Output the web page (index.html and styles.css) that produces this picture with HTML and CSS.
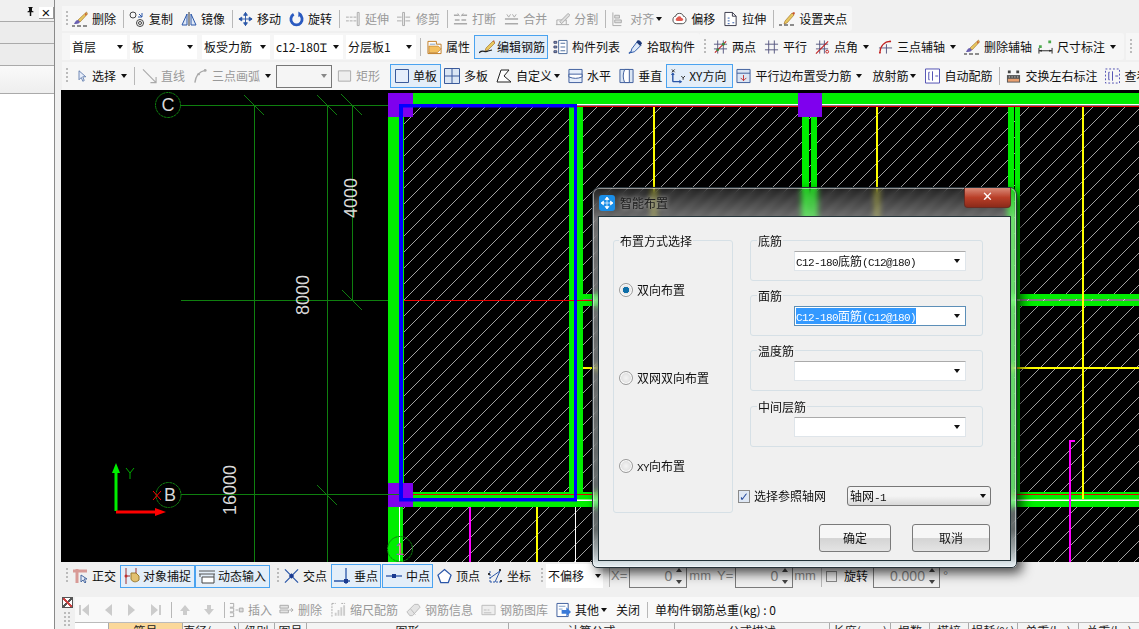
FILE: index.html
```html
<!DOCTYPE html>
<html lang="zh">
<head>
<meta charset="utf-8">
<title>智能布置</title>
<link rel="stylesheet" href="styles.css">
</head>
<body>
<svg class="sprite" aria-hidden="true">
<symbol id="i-pin" viewBox="0 0 12 12"><path d="M3 0h6v1H8v4l2 1v1H7v5H5V7H2V6l2-1V1H3z" fill="#111"/></symbol>
<symbol id="i-brush" viewBox="0 0 16 16"><path d="M14.500 1 6 9l2 2 7.500-8z" fill="#e8c860" stroke="#9a6a20" stroke-width=".6"/><path d="M13 2l2 1-1.500 2z" fill="#c8502a"/><path d="M6 9c-2 0-3 2-4 4 2 0 5 0 6-2z" fill="#6a60b0"/><path d="M0 15h3M5 15h4M11 15h4" stroke="#222"/></symbol>
<symbol id="i-copy" viewBox="0 0 16 16"><g fill="none" stroke="#444"><circle cx="4" cy="4" r="3"/><circle cx="11" cy="12" r="3.500"/><circle cx="11" cy="12" r="1.500"/></g><path d="M10 3l3 3M13 2v4H9" fill="none" stroke="#2a56a8"/></symbol>
<symbol id="i-mirror" viewBox="0 0 16 16"><path d="M8 1v14" stroke="#333"/><path d="M6 3 1 14h5zM10 3l5 11h-5z" fill="#dfe8f6" stroke="#2a56a8"/></symbol>
<symbol id="i-move" viewBox="0 0 16 16"><path d="M8 1v14M1 8h14M8 1 6 4h4zM8 15l-2-3h4zM1 8l3-2v4zM15 8l-3-2v4z" fill="#2a56a8" stroke="#2a56a8"/></symbol>
<symbol id="i-rotate" viewBox="0 0 16 16"><path d="M5 3a6 6 0 1 0 6 0" fill="none" stroke="#2a5ac0" stroke-width="3"/><path d="M10 0v6l4-3z" fill="#2a5ac0"/></symbol>
<symbol id="i-extend" viewBox="0 0 16 16"><path d="M0 6h3M4 6h3M8 6h3M0 10h3M4 10h3M8 10h3" stroke="#aaa"/><path d="M12 1h2v14h-2z" fill="#eee" stroke="#aaa"/></symbol>
<symbol id="i-trim" viewBox="0 0 16 16"><path d="M0 6h5M0 10h5M9 6h5M9 10h5" stroke="#aaa"/><path d="M6 1h2v14H6z" fill="#eee" stroke="#aaa"/></symbol>
<symbol id="i-break" viewBox="0 0 16 16"><path d="M1 4h5M9 4h6M1 13h14M2 9h5M9 9h5" stroke="#aaa" stroke-width="1.500"/><path d="M5 2l2 3M11 2l-2 3" stroke="#aaa"/></symbol>
<symbol id="i-merge" viewBox="0 0 16 16"><path d="M1 13h14M1 8h14" stroke="#aaa" stroke-width="1.500"/><path d="M3 3l2 3 2-3M9 3l2 3 2-3" fill="none" stroke="#aaa"/></symbol>
<symbol id="i-split" viewBox="0 0 16 16"><path d="M1 14h14M2 9h10M2 9v5M12 9v5" fill="none" stroke="#aaa"/><path d="M5 11 14 2l2 2-9 9z" fill="#ddd" stroke="#aaa"/></symbol>
<symbol id="i-align" viewBox="0 0 16 16"><path d="M2 1v14h9" fill="none" stroke="#aaa"/><path d="M4 4h5v3H4zM4 9h7v3H4z" fill="#ddd" stroke="#aaa"/></symbol>
<symbol id="i-offset" viewBox="0 0 16 16"><path d="M8 2c3 0 4 2 4 3 2 0 3 2 3 4s-2 4-4 4H5c-3 0-4-2-4-4s1-4 3-4c0-2 2-3 4-3z" fill="#fff" stroke="#444"/><path d="M8 5c2 0 2 2 2 2 2 0 2 2 2 2s-1 1-2 1H6c-2 0-2-1-2-1s0-2 1-2c0 0 1-2 3-2z" fill="#e05a50"/></symbol>
<symbol id="i-stretch" viewBox="0 0 16 16"><path d="M2 1h8l4 4v10H2z" fill="#fff" stroke="#334"/><path d="M10 1v4h4" fill="none" stroke="#334"/><path d="M5 7h2M5 10h2M5 13h2M10 12h2" stroke="#2a56a8"/></symbol>
<symbol id="i-grip" viewBox="0 0 16 16"><path d="M6 10 13 2l2 2-7 8-3 1z" fill="#e8c860" stroke="#9a6a20" stroke-width=".6"/><path d="M13 2l2 2 1-2-1-1z" fill="#c8502a"/><path d="M0 14h3M5 14h4M11 14h4" stroke="#222"/></symbol>
<symbol id="i-attr" viewBox="0 0 16 16"><path d="M1 2h9v3h5v10H1z" fill="#fff" stroke="#c07a20"/><path d="M2 7h10l3 3-4 4H2z" fill="#f4c060" stroke="#b07020" stroke-width=".6"/><path d="M3 5h6" stroke="#80a0c0"/></symbol>
<symbol id="i-edit" viewBox="0 0 16 16"><path d="M7 9 14 2l2 2-7 7-3 1z" fill="#e8c860" stroke="#9a6a20" stroke-width=".6"/><path d="M14 2l2 2-1-3z" fill="#c8502a"/><path d="M0 14c3-4 6 0 9-2l4-1" fill="none" stroke="#222" stroke-width="1.200"/></symbol>
<symbol id="i-list" viewBox="0 0 16 16"><path d="M6 1h9v14H6z" fill="#fff" stroke="#4a6a9a"/><path d="M8 4h5M8 8h5M8 12h5" stroke="#4a6a9a"/><path d="M1 2h3v2H1zM1 7h3v2H1zM1 12h3v2H1z" fill="#7aa0d0" stroke="#446"/></symbol>
<symbol id="i-pick" viewBox="0 0 16 16"><path d="M10 2l4 4-7 7-4 1 1-4z" fill="#dfeaf8" stroke="#2a56a8"/><path d="M10 1c2-1 4 1 5 3l-2 3-4-4z" fill="#1e3a78"/><path d="M1 15l2-2" stroke="#2a56a8" stroke-width="1.500"/></symbol>
<symbol id="i-twopt" viewBox="0 0 16 16"><path d="M1 5h14M1 10h14M5 1v14M11 1v14" stroke="#555680"/><path d="M2 14 14 2" stroke="#c02020" stroke-width="1.200"/><circle cx="5" cy="11" r="1.500" fill="#3a8a3a"/><circle cx="11" cy="5" r="1.500" fill="#3a8a3a"/></symbol>
<symbol id="i-par" viewBox="0 0 16 16"><path d="M1 5h14M1 11h14M5 1v14M11 1v14" stroke="#555680"/></symbol>
<symbol id="i-angle" viewBox="0 0 16 16"><path d="M1 5h13M1 10h13M5 1v14M10 1v14" stroke="#555680"/><path d="M1 15 14 2" stroke="#c02020" stroke-width="1.200"/><circle cx="13" cy="13" r="1.500" fill="none" stroke="#c02020"/></symbol>
<symbol id="i-arc3" viewBox="0 0 16 16"><path d="M1 9h14M9 5v10" stroke="#555680"/><path d="M2 14C2 7 7 2 13 2" fill="none" stroke="#c02020" stroke-width="1.200"/><circle cx="13" cy="2" r="1" fill="#c02020"/><circle cx="2" cy="14" r="1" fill="#c02020"/></symbol>
<symbol id="i-dim" viewBox="0 0 16 16"><path d="M1 9v6M15 9v6M1 12h14" stroke="#222"/><path d="M1 12l3-1v2zM15 12l-3-1v2z" fill="#222"/><path d="M1 6h3v3H1zM11 1h3v3h-3z" fill="#4caa4c"/></symbol>
<symbol id="i-select" viewBox="0 0 16 16"><path d="M4 1v12l3-3 2 5 2-1-2-5h4z" fill="#e8eefa" stroke="#4a6aa0"/></symbol>
<symbol id="i-line" viewBox="0 0 16 16"><path d="M1 1l14 14M15 9v6H9" fill="none" stroke="#aaa" stroke-width="1.200"/></symbol>
<symbol id="i-arc" viewBox="0 0 16 16"><path d="M2 15C3 8 7 3 13 2" fill="none" stroke="#aaa" stroke-width="1.500"/><circle cx="13" cy="2" r="1.500" fill="#aaa"/><circle cx="6" cy="6" r="1.300" fill="#aaa"/></symbol>
<symbol id="i-rect" viewBox="0 0 16 16"><path d="M1.500 2.500h13v11h-13z" fill="#eee" stroke="#aaa"/></symbol>
<symbol id="i-single" viewBox="0 0 16 16"><path d="M1.500 1.500h13v13h-13z" fill="#e6eefb" stroke="#3a5a9a"/></symbol>
<symbol id="i-multi" viewBox="0 0 16 16"><path d="M.5 .5h15v15H.5zM8 .5v15M.5 8h15" fill="#dbe6f4" stroke="#3a5a9a"/></symbol>
<symbol id="i-custom" viewBox="0 0 16 16"><path d="M1 14 5 2h8l-5 6 7 6z" fill="#fff" stroke="#222"/></symbol>
<symbol id="i-hor" viewBox="0 0 16 16"><path d="M1 1h14v14H1z" fill="#e6eefb" stroke="#3a5a9a"/><path d="M1 6h14v3c-5 2-9 2-14 0z" fill="#fff" stroke="#3a5a9a"/></symbol>
<symbol id="i-ver" viewBox="0 0 16 16"><path d="M1 1h14v14H1z" fill="#dbe6f4" stroke="#3a5a9a"/><path d="M6 1c-2 5-2 9 0 14h5V1z" fill="#fff" stroke="#3a5a9a"/></symbol>
<symbol id="i-xy" viewBox="0 0 16 16"><path d="M3 14V5M3 14h9" stroke="#2a56a8" stroke-width="1.500"/><path d="M3 4 1 7h4zM13 14l-3-2v4z" fill="#2a56a8"/><path d="M2 1l3 3M5 1 2 4" stroke="#222"/><path d="M12 8l2 2 2-2M14 10v2" fill="none" stroke="#222"/></symbol>
<symbol id="i-paredge" viewBox="0 0 16 16"><path d="M1 1h14v14H1z" fill="#dbe6f4" stroke="#3a5a9a"/><path d="M1 5h14" stroke="#3a5a9a"/><path d="M8 7v6M5 10l3 3 3-3" fill="none" stroke="#c03030"/></symbol>
<symbol id="i-auto" viewBox="0 0 16 16"><path d="M.5 .5h15v15H.5z" fill="#fff" stroke="#4a4ab0"/><path d="M8 3v10M5 4H4v8h1M11 8h3" fill="none" stroke="#4a4ab0"/></symbol>
<symbol id="i-swap" viewBox="0 0 16 16"><path d="M1 7h14v8H1z" fill="#555"/><path d="M2 11h12v3H2z" fill="#e9a070"/><path d="M2 2h3v3H2zM11 2h3v3h-3z" fill="#444"/><path d="M3 9h1M6 9h1M9 9h1M12 9h1" stroke="#fff"/></symbol>
<symbol id="i-view" viewBox="0 0 16 16"><path d="M.5 .5h15v15H.5z" fill="none" stroke="#4a4ab0" stroke-dasharray="2 2"/><path d="M8 3v10M5 4H4v8h1M11 8h3" fill="none" stroke="#4a4ab0"/></symbol>
<symbol id="i-ortho" viewBox="0 0 16 16"><path d="M1 3h14M5 1v14" stroke="#d89a96" stroke-width="3"/><path d="M9 7v7l2-2 2 3 1-1-2-3h3z" fill="#e8eefa" stroke="#4a6aa0"/></symbol>
<symbol id="i-snap" viewBox="0 0 16 16"><path d="M2 0v16M2 8h4" stroke="#a03030"/><circle cx="2" cy="8" r="1.500" fill="#c03030"/><path d="M7 5h5l3 3v4c-3 3-7 2-8-1z" fill="#e2c070" stroke="#9a7a30"/><path d="M12 0v5" stroke="#a03030"/></symbol>
<symbol id="i-dyn" viewBox="0 0 16 16"><path d="M0 3h16M0 6h16" stroke="#555"/><path d="M1 6v3M15 6v3" stroke="#555"/><path d="M3 9h12v6H3z" fill="#fff" stroke="#444"/></symbol>
<symbol id="i-cross" viewBox="0 0 16 16"><path d="M1 1l14 14M15 1 1 15" stroke="#2a56a8" stroke-width="1.300"/><path d="M6 6h4v4H6z" fill="#1a3a90" transform="rotate(45 8 8)"/></symbol>
<symbol id="i-perp" viewBox="0 0 16 16"><path d="M0 13h16M12 0v16" stroke="#2a56a8" stroke-width="1.300"/><path d="M10 11h4v4h-4z" fill="#1a3a90"/></symbol>
<symbol id="i-mid" viewBox="0 0 16 16"><path d="M0 8h16" stroke="#2a56a8" stroke-width="1.300"/><path d="M6 6h4v4H6z" fill="#1a3a90"/></symbol>
<symbol id="i-vertex" viewBox="0 0 16 16"><path d="M8 1l7 6-3 8H4L1 7z" fill="#fff" stroke="#2a56a8" stroke-width="1.300"/></symbol>
<symbol id="i-coord" viewBox="0 0 16 16"><path d="M3 14V3M3 14h11" stroke="#2a56a8" stroke-dasharray="2 1"/><path d="M3 10 13 3M8 14 13 3" stroke="#2a56a8"/><path d="M1 5h2v2H1zM12 1h2v2h-2zM13 12h2v2h-2z" fill="#333"/></symbol>
<symbol id="i-first" viewBox="0 0 16 16"><path d="M3 3h2v10H3zM13 2v12L6 8z" fill="#ccc"/></symbol>
<symbol id="i-prev" viewBox="0 0 16 16"><path d="M12 2v12L5 8z" fill="#ccc"/></symbol>
<symbol id="i-next" viewBox="0 0 16 16"><path d="M4 2v12l7-6z" fill="#ccc"/></symbol>
<symbol id="i-last" viewBox="0 0 16 16"><path d="M11 3h2v10h-2zM3 2v12l7-6z" fill="#ccc"/></symbol>
<symbol id="i-up" viewBox="0 0 16 16"><path d="M8 3l5 6h-3v4H6V9H3z" fill="#ccc"/></symbol>
<symbol id="i-down" viewBox="0 0 16 16"><path d="M8 13l5-6h-3V3H6v4H3z" fill="#ccc"/></symbol>
<symbol id="i-ins" viewBox="0 0 16 16"><path d="M1 1h4v4H1M1 6h4v4H1M1 11h4v4H1" fill="none" stroke="#aaa"/><path d="M7 8h3M11 6h4v4h-4z" fill="#ddd" stroke="#aaa"/></symbol>
<symbol id="i-del2" viewBox="0 0 16 16"><path d="M1 3h9v3H1zM1 8h9v3H1z" fill="#e4e4e4" stroke="#aaa"/><path d="M11 8h4M13 6l2 2-2 2" fill="none" stroke="#aaa"/></symbol>
<symbol id="i-scale" viewBox="0 0 16 16"><path d="M1 1v14M1 1h4M11 1h4" stroke="#aaa" stroke-dasharray="2 1"/><path d="M4 14h2v-3H4zM7 14h2V8H7zM10 14h2V5h-2zM13 14h2V3h-2z" fill="#ccc"/></symbol>
<symbol id="i-info" viewBox="0 0 16 16"><path d="M1 10 9 2h4l2 3-8 9H4z" fill="#e4e4e4" stroke="#bbb"/><path d="M5 7l5 6" stroke="#bbb"/></symbol>
<symbol id="i-lib" viewBox="0 0 16 16"><path d="M1 3h14v10H1z" fill="#eee" stroke="#bbb"/><path d="M3 8h3M7 8h2M3 11h8" stroke="#bbb"/></symbol>
<symbol id="i-other" viewBox="0 0 16 16"><path d="M1 1h12v14H1z" fill="#fff" stroke="#3a5a9a"/><path d="M3 4h7M3 7h4" stroke="#7a9ac8"/><path d="M6 8h5V5l5 5-5 5v-3H6z" fill="#3a7ad8"/></symbol>
<symbol id="i-win" viewBox="0 0 16 16"><rect width="16" height="16" rx="3" fill="#1a8ee8"/><path d="M8 2v12M2 8h12M8 2 6 4.500h4zM8 14l-2-2.500h4zM2 8l2.500-2v4zM14 8l-2.500-2v4z" fill="#fff" stroke="#fff" stroke-width=".7"/></symbol>
</svg>

<aside class="sidebar">
  <div class="side-head"><svg class="pin"><use href="#i-pin"/></svg><span class="side-x">×</span></div>
  <div class="side-row"></div>
  <div class="side-row"></div>
  <div class="side-light"></div>
  <div class="side-body"></div>
</aside>

<main class="main">
  <div class="bar bar1">
    <i class="handle"></i>
    <span class="tool m4"><svg class="ic"><use href="#i-brush"/></svg>删除</span>
    <i class="sep"></i>
    <span class="tool"><svg class="ic"><use href="#i-copy"/></svg>复制</span>
    <span class="tool"><svg class="ic"><use href="#i-mirror"/></svg>镜像</span>
    <i class="sep"></i>
    <span class="tool"><svg class="ic n"><use href="#i-move"/></svg>移动</span>
    <span class="tool"><svg class="ic n"><use href="#i-rotate"/></svg>旋转</span>
    <i class="sep wider"></i>
    <span class="tool off"><svg class="ic n"><use href="#i-extend"/></svg>延伸</span>
    <span class="tool off"><svg class="ic n"><use href="#i-trim"/></svg>修剪</span>
    <i class="sep"></i>
    <span class="tool off"><svg class="ic n"><use href="#i-break"/></svg>打断</span>
    <span class="tool off"><svg class="ic n"><use href="#i-merge"/></svg>合并</span>
    <span class="tool off"><svg class="ic n"><use href="#i-split"/></svg>分割</span>
    <i class="sep"></i>
    <span class="tool off"><svg class="ic n"><use href="#i-align"/></svg>对齐<b class="arrow gap"></b></span>
    <span class="tool t10"><svg class="ic n"><use href="#i-offset"/></svg>偏移</span>
    <span class="tool"><svg class="ic n"><use href="#i-stretch"/></svg>拉伸</span>
    <i class="sep"></i>
    <span class="tool"><svg class="ic"><use href="#i-grip"/></svg>设置夹点</span>
  </div>

  <div class="bar-line">
    <div class="bar bar2">
      <span class="combo w57">首层<b class="arrow"></b></span>
      <span class="combo w67 after5">板<b class="arrow"></b></span>
      <span class="combo w68">板受力筋<b class="arrow"></b></span>
      <span class="combo w69">c12-180Ɪ<b class="arrow"></b></span>
      <span class="combo w70">分层板1<b class="arrow"></b></span>
      <i class="sep"></i>
      <span class="tool"><svg class="ic n"><use href="#i-attr"/></svg>属性</span>
      <span class="tool on edit"><svg class="ic"><use href="#i-edit"/></svg>编辑钢筋</span>
      <span class="tool tight"><svg class="ic n"><use href="#i-list"/></svg>构件列表</span>
      <span class="tool t8"><svg class="ic n"><use href="#i-pick"/></svg>拾取构件</span>
    </div>
    <div class="bar bar2b">
      <i class="handle"></i>
      <span class="tool m7"><svg class="ic n"><use href="#i-twopt"/></svg>两点</span>
      <span class="tool"><svg class="ic n"><use href="#i-par"/></svg>平行</span>
      <span class="tool"><svg class="ic n"><use href="#i-angle"/></svg>点角<b class="arrow wide"></b></span>
      <span class="tool t9"><svg class="ic n"><use href="#i-arc3"/></svg>三点辅轴<b class="arrow wide"></b></span>
      <span class="tool t8"><svg class="ic"><use href="#i-brush"/></svg>删除辅轴</span>
      <span class="tool t6"><svg class="ic n"><use href="#i-dim"/></svg>尺寸标注<b class="arrow wide"></b></span>
    </div>
    <div class="bar bar2c"><i class="handle"></i></div>
  </div>

  <div class="bar bar3">
    <i class="handle"></i>
    <span class="tool"><svg class="ic s"><use href="#i-select"/></svg>选择<b class="arrow wide"></b></span>
    <i class="sep wider"></i>
    <span class="tool off t9"><svg class="ic n"><use href="#i-line"/></svg>直线</span>
    <span class="tool off"><svg class="ic n"><use href="#i-arc"/></svg>三点画弧<b class="arrow wide"></b></span>
    <span class="field w56"><b class="arrow gray"></b></span>
    <span class="tool off t5"><svg class="ic n"><use href="#i-rect"/></svg>矩形</span>
    <span class="tool on single"><svg class="ic"><use href="#i-single"/></svg>单板</span>
    <span class="tool t3"><svg class="ic"><use href="#i-multi"/></svg>多板</span>
    <span class="tool"><svg class="ic"><use href="#i-custom"/></svg>自定义<b class="arrow gap"></b></span>
    <span class="tool t8"><svg class="ic n"><use href="#i-hor"/></svg>水平</span>
    <span class="tool"><svg class="ic n"><use href="#i-ver"/></svg>垂直</span>
    <span class="tool on xy"><svg class="ic n"><use href="#i-xy"/></svg>XY方向</span>
    <span class="tool t3"><svg class="ic n"><use href="#i-paredge"/></svg>平行边布置受力筋<b class="arrow wide"></b></span>
    <span class="tool t10">放射筋<b class="arrow gap"></b></span>
    <span class="tool t9"><svg class="ic n"><use href="#i-auto"/></svg>自动配筋</span>
    <i class="sep wider"></i>
    <span class="tool"><svg class="ic n"><use href="#i-swap"/></svg>交换左右标注</span>
    <span class="tool"><svg class="ic n"><use href="#i-view"/></svg>查看</span>
  </div>

  <svg class="canvas" viewBox="61 90 1078 472" role="img" aria-label="钢筋布置图">
    <defs>
      <pattern id="hatch" patternUnits="userSpaceOnUse" width="16" height="16">
        <path d="M0 16 16 0" stroke="#a0a0a0" stroke-width="1" shape-rendering="crispEdges"/>
      </pattern>
    </defs>
    <rect x="403" y="107" width="736" height="455" fill="url(#hatch)"/>
    <g fill="#00ee00">
      <rect x="388" y="93" width="751" height="11"/>
      <rect x="388" y="104" width="11" height="458"/>
      <rect x="403" y="117" width="1" height="375"/>
      <rect x="569" y="107" width="14" height="385"/>
      <rect x="802" y="104" width="7" height="190"/>
      <rect x="811" y="104" width="6" height="190"/>
      <rect x="1008" y="107" width="6" height="385"/>
      <rect x="1015" y="107" width="5" height="385"/>
      <rect x="583" y="294" width="556" height="5"/>
      <rect x="583" y="301" width="556" height="5"/>
      <rect x="403" y="492" width="736" height="15"/>
      <rect x="399" y="507" width="4" height="55"/>
    </g>
    <g fill="#fff">
      <rect x="577" y="104" width="562" height="1.500"/>
      <rect x="583" y="299.500" width="556" height="1"/>
      <rect x="577" y="499.500" width="562" height="1.500"/>
      <rect x="399" y="507" width="1" height="55"/>
      <rect x="575" y="507" width="1" height="55"/>
    </g>
    <g fill="#e80000">
      <rect x="577" y="106" width="562" height="1"/>
      <rect x="404" y="300" width="188" height="1"/>
      <rect x="403" y="494" width="736" height="1"/>
    </g>
    <g fill="#ffff00">
      <rect x="653" y="107" width="2" height="385"/>
      <rect x="876" y="107" width="2" height="385"/>
      <rect x="1082" y="107" width="2" height="392"/>
      <rect x="583" y="367" width="556" height="2"/>
      <rect x="536" y="507" width="2" height="55"/>
    </g>
    <g fill="#ff00ff">
      <rect x="469" y="507" width="2" height="55"/>
      <rect x="1069" y="441" width="2" height="121"/>
      <rect x="1069" y="440" width="6" height="2"/>
    </g>
    <g fill="#7f00ee">
      <rect x="388" y="93" width="25" height="24"/>
      <rect x="798" y="93" width="24" height="24"/>
      <rect x="388" y="483" width="25" height="24"/>
    </g>
    <g fill="#0000ff">
      <rect x="399" y="104" width="178" height="3.500"/>
      <rect x="399" y="104" width="4" height="397"/>
      <rect x="574" y="104" width="3" height="397"/>
      <rect x="399" y="498" width="178" height="3.500"/>
    </g>
    <g stroke="#0f7f0f" fill="none">
      <path d="M181 105.500H388M181 300.500H388M181 494.500H399M254.500 105V562M327.500 105V562M352.500 105V300"/>
      <path d="M244 95l20 20M317 95l20 20M341 94l21 21M342 290l20 20M317 485l20 20"/>
      <circle cx="168" cy="105" r="12.500" stroke-dasharray="3 .5"/>
      <circle cx="168.500" cy="495" r="12.500" stroke-dasharray="3 .5"/>
      <circle cx="400" cy="549" r="12.500" stroke-dasharray="3 .5"/>
    </g>
    <g class="cad-text">
      <text x="168" y="111" text-anchor="middle">C</text>
      <text x="170" y="501" text-anchor="middle">B</text>
      <text class="mark" x="400" y="555" text-anchor="middle">1</text>
      <text transform="translate(357 218) rotate(-90)">4000</text>
      <text transform="translate(309 315) rotate(-90)">8000</text>
      <text transform="translate(236 515) rotate(-90)">16000</text>
    </g>
    <path d="M153 491l8 9M161 491l-8 9" stroke="#f00" fill="none"/>
    <path d="M116 511V472" stroke="#00ee00" stroke-width="3"/>
    <path d="M116 463l-4 10h8z" fill="#00ee00"/>
    <path d="M116 512h39" stroke="#f00" stroke-width="3"/>
    <path d="M166 512l-11-4v8z" fill="#f00"/>
    <path d="M126 468l4 5 4-5M130 473v6" stroke="#00aa00" fill="none"/>
  </svg>

  <div class="bar bar4">
    <i class="handle"></i>
    <span class="tool m4"><svg class="ic"><use href="#i-ortho"/></svg>正交</span>
    <span class="tool on snap"><svg class="ic"><use href="#i-snap"/></svg>对象捕捉</span>
    <span class="tool on dyn"><svg class="ic"><use href="#i-dyn"/></svg>动态输入</span>
    <i class="handle h2"></i>
    <span class="tool t5"><svg class="ic n"><use href="#i-cross"/></svg>交点</span>
    <span class="tool on pt"><svg class="ic"><use href="#i-perp"/></svg>垂点</span>
    <span class="tool on pt pt2"><svg class="ic"><use href="#i-mid"/></svg>中点</span>
    <span class="tool m4"><svg class="ic n"><use href="#i-vertex"/></svg>顶点</span>
    <span class="tool t7"><svg class="ic"><use href="#i-coord"/></svg>坐标</span>
    <i class="handle h3"></i>
    <span class="combo w57 flat">不偏移<b class="arrow"></b></span>
    <i class="sep s1"></i>
    <span class="lbl off">X=</span>
    <span class="spin w58"><span>0</span><b class="updown"></b></span>
    <span class="lbl off mm">mm</span>
    <span class="lbl off y">Y=</span>
    <span class="spin w58"><span>0</span><b class="updown"></b></span>
    <span class="lbl off mm2">mm</span>
    <i class="sep s2"></i>
    <span class="box"></span>
    <span class="lbl rot">旋转</span>
    <span class="spin w67 rotv"><span>0.000</span><b class="updown"></b></span>
    <span class="lbl off deg">°</span>
  </div>

  <div class="lower">
    <div class="close-col"><span class="closebox"></span><i class="dots"></i></div>
    <div class="lower-main">
      <div class="bar bar5">
        <span class="tool navbtn"><svg class="ic"><use href="#i-first"/></svg></span>
        <span class="tool navbtn"><svg class="ic"><use href="#i-prev"/></svg></span>
        <span class="tool navbtn"><svg class="ic"><use href="#i-next"/></svg></span>
        <span class="tool navbtn"><svg class="ic"><use href="#i-last"/></svg></span>
        <i class="sep"></i>
        <span class="tool navbtn"><svg class="ic"><use href="#i-up"/></svg></span>
        <span class="tool navbtn"><svg class="ic"><use href="#i-down"/></svg></span>
        <i class="sep"></i>
        <span class="tool off t7"><svg class="ic n"><use href="#i-ins"/></svg>插入</span>
        <span class="tool off t7"><svg class="ic n"><use href="#i-del2"/></svg>删除</span>
        <span class="tool off t9"><svg class="ic n"><use href="#i-scale"/></svg>缩尺配筋</span>
        <span class="tool off"><svg class="ic n"><use href="#i-info"/></svg>钢筋信息</span>
        <span class="tool off"><svg class="ic n"><use href="#i-lib"/></svg>钢筋图库</span>
        <span class="tool"><svg class="ic n"><use href="#i-other"/></svg>其他<b class="arrow gap"></b></span>
        <span class="tool t9">关闭</span>
        <i class="sep wider"></i>
        <span class="tool t9">单构件钢筋总重(kg) : 0</span>
      </div>
      <div class="thead">
        <span class="th c34"></span>
        <span class="th c74 hot">筋号</span>
        <span class="th c56">直径(mm)</span>
        <span class="th c36">级别</span>
        <span class="th c32">图号</span>
        <span class="th c202">图形</span>
        <span class="th c166">计算公式</span>
        <span class="th c155">公式描述</span>
        <span class="th c61">长度(mm)</span>
        <span class="th c39">根数</span>
        <span class="th c39">搭接</span>
        <span class="th c49">损耗(%)</span>
        <span class="th c61">单重(kg)</span>
        <span class="th c61">总重(kg)</span>
      </div>
    </div>
  </div>
</main>

<section class="dialog" aria-label="智能布置">
  <header class="dlg-title">
    <svg class="ic"><use href="#i-win"/></svg>
    <span class="dlg-name">智能布置</span>
    <span class="dlg-close">✕</span>
  </header>
  <div class="client">
    <div class="client-top">
      <div class="group radios">
        <span class="legend">布置方式选择</span>
        <label class="radio checked first"><span>双向布置</span></label>
        <label class="radio"><span>双网双向布置</span></label>
        <label class="radio"><span><span class="lat">XY</span>向布置</span></label>
      </div>
      <div class="right">
        <div class="group rebar">
          <span class="legend">底筋</span>
          <span class="dcombo"><span><span class="lat">C12-180</span>底筋<span class="lat">(C12@180)</span></span><b class="arrow"></b></span>
        </div>
        <div class="group rebar">
          <span class="legend">面筋</span>
          <span class="dcombo focus"><span class="selected"><span class="lat">C12-180</span>面筋<span class="lat">(C12@180)</span></span><b class="arrow"></b></span>
        </div>
        <div class="group rebar">
          <span class="legend">温度筋</span>
          <span class="dcombo"><span></span><b class="arrow"></b></span>
        </div>
        <div class="group rebar last">
          <span class="legend">中间层筋</span>
          <span class="dcombo"><span></span><b class="arrow"></b></span>
        </div>
        <div class="axis-row">
          <span class="check">✓</span>
          <span class="axis-label">选择参照轴网</span>
          <span class="axis-combo"><span>轴网<span class="lat">-1</span></span><b class="arrow"></b></span>
        </div>
      </div>
    </div>
    <div class="actions">
      <button class="btn ok" type="button">确定</button>
      <button class="btn cancel" type="button">取消</button>
    </div>
  </div>
</section>
</body>
</html>
```

FILE: styles.css
```css
* { box-sizing: border-box; }
html, body { margin: 0; height: 629px; overflow: hidden; }
body {
  position: relative;
  display: flex;
  width: 1139px;
  background: #f0f0f0;
  color: #111;
  font: 12px/16px "Noto Sans CJK SC", "Liberation Sans", sans-serif;
}
.sprite { display: none; }

/* left docked panel */
.sidebar { flex: 0 0 55px; display: flex; flex-direction: column; border-right: 1px solid #8a8a8a; }
.side-head { height: 22px; display: flex; align-items: center; padding: 0 0 2px 26px; background: #f0f0f0; border-bottom: 1px solid #aaa; }
.pin { flex: none; width: 9px; height: 9px; margin-top: 4px; }
.side-x { flex: none; width: 15px; height: 12px; margin: 6px 0 0 4px; border: 1px solid #999; border-width: 0 1px 1px 0; background: #fff; font: 15px/11px "Liberation Sans", sans-serif; text-align: center; }
.side-row { height: 22px; background: #ececec; border-bottom: 1px solid #aaa; }
.side-light { height: 28px; background: linear-gradient(#fafafa, #eee); border-bottom: 1px solid #aaa; }
.side-body { flex: 1; background: #fff; }

.main { flex: 1; min-width: 0; padding: 6px 0 0 6px; display: flex; flex-direction: column; }

/* toolbars */
.bar { display: flex; align-items: center; background: #f6f6f6; white-space: nowrap; }
.bar1 { width: 790px; height: 25px; margin-left: 1px; border-radius: 0 3px 3px 0; }
.bar-line { display: flex; height: 27px; margin: 2px 0 2px 1px; }
.bar2 { width: 638px; border-radius: 0 3px 3px 0; padding-left: 8px; }
.bar2b { width: 424px; border-radius: 0 3px 3px 0; }
.bar2c { flex: 1; margin-left: 2px; }
.bar3 { height: 28px; margin-left: 1px; overflow: hidden; }
.bar4 { height: 26px; margin: 1px 0 0 1px; background: #f0f0f0; }
.bar5 { height: 25px; background: #f9f9f9; }
.handle { flex: none; width: 2px; height: 16px; margin-left: 4px; background: repeating-linear-gradient(#bbb 0 2px, transparent 2px 4px); }
.handle.h2 { margin-left: 7px; }
.handle.h3 { margin-left: 10px; }
.tool { display: inline-flex; flex: none; align-items: center; gap: 4px; margin-left: 8px; height: 23px; }
.tool.m4 { margin-left: 4px; }
.tool.m7, .tool.t7 { margin-left: 7px; }
.tool.t3 { margin-left: 3px; }
.tool.t5 { margin-left: 5px; }
.tool.t6 { margin-left: 6px; }
.tool.t8 { margin-left: 8px; }
.tool.t9 { margin-left: 9px; }
.tool.t10 { margin-left: 10px; }
.tool.off { color: #999; }
.ic { flex: none; width: 16px; height: 16px; }
.ic.n { width: 15px; }
.ic.s { width: 12px; }
.sep { flex: none; width: 1px; height: 18px; margin: 0 -3px 0 7px; background: #b8b8b8; }
.sep.wider { margin-right: -2px; }
.sep.s1 { height: 22px; margin: 0 0 0 2px; }
.sep.s2 { height: 22px; margin: 0 0 0 5px; }
.arrow { flex: none; display: inline-block; width: 0; height: 0; border: 3.500px solid transparent; border-top: 4px solid #111; border-bottom: 0; }
.arrow.gap { margin-left: -2px; }
.arrow.wide { margin-left: 1px; }
.arrow.gray { border-top-color: #888; }

.combo { flex: none; display: flex; align-items: center; justify-content: space-between; height: 24px; margin-right: 3px; padding: 0 3px 0 2px; background: #fff; overflow: hidden; }
.combo .arrow { margin-right: 1px; }
.combo.after5 { margin-right: 5px; }
.w57 { width: 57px; } .w67 { width: 67px; } .w68 { width: 68px; } .w69 { width: 69px; } .w70 { width: 70px; } .w58 { width: 58px; } .w56 { width: 56px; }
.combo.w68 { margin-right: 4px; }
.combo.w69 { margin-right: 3px; }
.combo.flat { margin: 0 4px 0 3px; padding-right: 2px; }
.combo.flat .arrow { margin-right: 0; }
.bar2 .sep { margin-left: 1px; }
.bar2 .tool { margin-left: 9px; }

.on { padding: 0 3px; background: #e3eef9; border: 1px solid #4aa3f0; }
.bar2 .tool.edit { margin-left: 4px; height: 24px; padding: 0 2px 0 4px; gap: 2px; }
.bar2 .tool.tight { margin-left: 5px; }
.bar2 .tool.t8 { margin-left: 8px; }
.tool.single { margin-left: 10px; height: 24px; gap: 3px; }
.tool.xy { margin-left: 4px; height: 24px; padding-right: 6px; }
.field { flex: none; display: flex; align-items: center; justify-content: flex-end; height: 23px; margin-left: 5px; padding-right: 4px; border: 1px solid #777; background: #f5f5f5; }

.tool.snap { margin-left: 4px; width: 75px; gap: 3px; }
.tool.dyn { margin-left: 0; width: 75px; gap: 3px; }
.tool.pt { margin-left: 4px; width: 50px; height: 24px; padding: 0 2px; }
.tool.pt2 { margin-left: 1px; width: 51px; padding-left: 3px; }

.lbl { flex: none; margin-left: 1px; font: 13px/16px "Liberation Sans", sans-serif; }
.lbl.off { color: #8a8a8a; }
.lbl.mm { margin-left: 2px; }
.lbl.mm2 { margin-left: 1px; }
.lbl.y { margin-left: 6px; }
.lbl.rot { margin-left: 7px; font: 12px/16px "Noto Sans CJK SC", sans-serif; }
.lbl.deg { margin-left: 3px; }
.spin { flex: none; display: flex; align-items: center; justify-content: flex-end; gap: 4px; height: 24px; margin-left: 2px; padding-right: 3px; border: 1px solid #7a7a7a; border-top-color: transparent; color: #888; font: 14px "Liberation Sans", sans-serif; }
.rotv { margin-left: 5px; }
.updown { display: flex; flex-direction: column; justify-content: space-between; width: 7px; height: 16px; }
.updown::before, .updown::after { content: ""; width: 0; height: 0; border: 3.500px solid transparent; }
.updown::before { border-bottom: 4px solid #444; border-top: 0; }
.updown::after { border-top: 4px solid #444; border-bottom: 0; }
.box { flex: none; width: 11px; height: 11px; margin-left: 4px; border: 1px solid #888; }

/* canvas */
.canvas { flex: none; display: block; width: 1078px; height: 472px; background: #000; }
.cad-text { font: 18px "Liberation Sans", sans-serif; fill: #d8d8d8; }
.cad-text .mark { font-size: 16px; fill: #b060b0; }

/* lower panel */
.lower { display: flex; flex: 1; margin-top: 8px; }
.close-col { flex: none; width: 14px; padding-left: 1px; }
.closebox { display: block; width: 11px; height: 11px; border: 1px solid #555; background:
  linear-gradient(45deg, transparent 44%, #c44 44% 56%, transparent 56%),
  linear-gradient(-45deg, transparent 44%, #555 44% 56%, transparent 56%), #fff; }
.dots { display: block; width: 8px; height: 16px; margin: 3px 0 0 1px; background: radial-gradient(#bbb 40%, transparent 45%) 0 0 / 4px 4px; }
.lower-main { flex: 1; min-width: 0; }
.navbtn { margin-left: 8px; }
.bar5 .sep { height: 16px; }
.bar5 .navbtn:first-child { margin-left: 1px; }
.thead { display: flex; height: 7px; background: #fff; border-top: 1px solid #bbb; overflow: hidden; }
.th { flex: none; height: 20px; border-right: 1px solid #aaa; text-align: center; background: #f4f4f4; color: #222; }
.th.hot { background: #fbd89a; }
.c34 { width: 34px; background: #fff; } .c74 { width: 74px; } .c56 { width: 56px; } .c36 { width: 36px; } .c32 { width: 32px; }
.c202 { width: 202px; } .c166 { width: 166px; } .c155 { width: 155px; } .c61 { width: 61px; } .c39 { width: 39px; } .c49 { width: 49px; }

/* dialog window */
.dialog {
  position: absolute; left: 592px; top: 187px; width: 425px; height: 381px;
  display: flex; flex-direction: column; padding: 0 5px 6px;
  border: 1px solid #27333a; border-radius: 7px 7px 5px 5px;
  background: linear-gradient(rgba(255,255,255,.12), rgba(255,255,255,.42) 8%, rgba(210,225,225,.45) 90%, rgba(225,235,240,.95));
  -webkit-backdrop-filter: blur(3px); backdrop-filter: blur(3px);
  box-shadow: 5px 5px 12px rgba(0,0,0,.7), inset 0 0 0 1px rgba(255,255,255,.5);
}
.dlg-title { flex: none; display: flex; align-items: center; height: 28px; padding-left: 1px; }
.dlg-title .ic { margin-top: 1px; }
.dlg-name { margin-left: 5px; margin-top: 1px; color: #1c1c1c; text-shadow: 0 0 5px rgba(255,255,255,.7); }
.dlg-close { width: 47px; height: 20px; margin: -8px 0 0 auto; border: 1px solid #6a2b22; border-top: 0; border-radius: 0 0 4px 4px; background: linear-gradient(#d98a78, #b93f28 50%, #8c2a1a); color: #fff; font: bold 13px/18px "DejaVu Sans", sans-serif; text-align: center; }
.client { flex: 1; display: flex; flex-direction: column; padding: 23px 20px 0 14px; background: #f0f0f0; border: 1px solid #24343a; }
.client-top { display: flex; gap: 17px; height: 273px; }
.group { border: 1px solid #d6e0e6; border-radius: 3px; }
.legend { display: table; margin: -8px 0 0 6px; padding: 0 1px; background: #f0f0f0; }
.radios { flex: none; width: 120px; }
.radios .legend { margin-left: 5px; }
.radio { display: flex; align-items: center; gap: 4px; margin: 72px 0 0 5px; }
.radio.first { margin-top: 33px; }
.radio::before { content: ""; flex: none; width: 12px; height: 12px; border-radius: 50%; border: 1px solid #9a9a9a; background: radial-gradient(#f4f4f4, #d4d4d4); box-shadow: inset 0 0 0 1px #fff; }
.radio.checked::before { background: radial-gradient(#0d6ea8 0 3px, #e8e8e8 3.500px); }
.right { flex: none; width: 233px; }
.rebar { height: 41px; margin-bottom: 14px; }
.rebar.last { margin-top: 15px; margin-bottom: 39px; }
.dcombo { display: flex; align-items: center; justify-content: space-between; width: 172px; height: 20px; margin: 2px 0 0 43px; padding: 0 5px 0 1px; background: #fff; border: 1px solid #dfe5ea; border-top-color: #aaa; }
.dcombo.focus { border-color: #5c8fb8; }
.selected { background: #3399ff; color: #fff; }
.lat { font: 11px "Liberation Mono", monospace; letter-spacing: -.6px; }
.axis-row { display: flex; align-items: center; width: 253px; height: 20px; margin-left: -12px; }
.check { flex: none; width: 12px; height: 13px; margin-right: 4px; border: 1px solid #8a8a8a; background: #dfe8f5; color: #2a4ea0; font: bold 12px/12px "DejaVu Sans", sans-serif; text-align: center; }
.axis-label { flex: none; width: 93px; }
.axis-combo { flex: none; display: flex; align-items: center; justify-content: space-between; width: 144px; height: 20px; padding: 0 4px 0 2px; border: 1px solid #777; border-radius: 3px; background: linear-gradient(#f4f4f4 50%, #d8d8d8); }
.actions { display: flex; justify-content: flex-end; gap: 21px; margin-top: 11px; }
.btn { width: 72px; height: 28px; padding: 0; border: 1px solid #7a7a7a; border-radius: 3px; background: linear-gradient(#f6f6f6 50%, #d4d4d4 52%, #e4e4e4); color: #111; font: inherit; }
.btn.cancel { width: 78px; }
```
